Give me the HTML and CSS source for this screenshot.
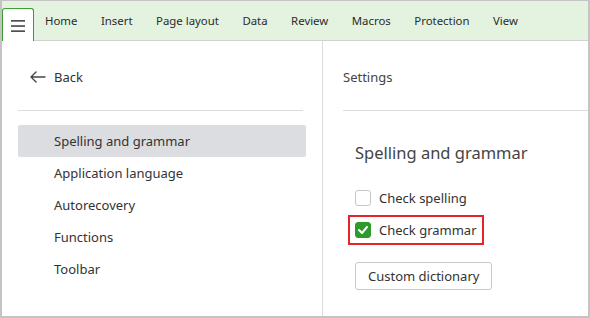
FILE: index.html
```html
<!DOCTYPE html>
<html>
<head>
<meta charset="utf-8">
<link rel="stylesheet" href="styles.css">
</head>
<body>
<div class="window">
  <div class="toolbar">
    <div class="menu-btn">
      <svg width="14" height="12" viewBox="0 0 14 12"><rect x="0" y="0" width="14" height="1.7" fill="#505050"/><rect x="0" y="5.2" width="14" height="1.7" fill="#505050"/><rect x="0" y="10.3" width="14" height="1.7" fill="#505050"/></svg>
    </div>
    <nav class="tabs">
      <span class="tab">Home</span>
      <span class="tab">Insert</span>
      <span class="tab">Page layout</span>
      <span class="tab">Data</span>
      <span class="tab">Review</span>
      <span class="tab">Macros</span>
      <span class="tab">Protection</span>
      <span class="tab">View</span>
    </nav>
  </div>
  <div class="main">
    <aside class="side">
      <div class="back">
        <svg class="back-icon" width="16" height="12" viewBox="0 0 16 12"><path d="M6 1 L1 6 L6 11 M1 6 H15" fill="none" stroke="#444" stroke-width="1.4" stroke-linecap="round" stroke-linejoin="round"/></svg>
        <span>Back</span>
      </div>
      <div class="side-rule"></div>
      <ul class="menu">
        <li class="item selected">Spelling and grammar</li>
        <li class="item">Application language</li>
        <li class="item">Autorecovery</li>
        <li class="item">Functions</li>
        <li class="item">Toolbar</li>
      </ul>
    </aside>
    <section class="content">
      <div class="title">Settings</div>
      <div class="rule"></div>
      <div class="body">
        <h2 class="heading">Spelling and grammar</h2>
        <div class="check-row">
          <span class="box"></span>
          <span>Check spelling</span>
        </div>
        <div class="check-row">
          <div class="highlight">
            <span class="box checked">
              <svg width="12" height="10" viewBox="0 0 12 10"><path d="M2 5 L5 8 L10 2" fill="none" stroke="#fff" stroke-width="2" stroke-linecap="round" stroke-linejoin="round"/></svg>
            </span>
            <span>Check grammar</span>
          </div>
        </div>
        <button class="btn">Custom dictionary</button>
      </div>
    </section>
  </div>
</div>
</body>
</html>
```

FILE: styles.css
```css
* { box-sizing: border-box; }
html, body { margin: 0; padding: 0; background: #fff; }
body {
  font-family: "Noto Sans", "Open Sans", sans-serif;
  color: #333;
  width: 590px;
  height: 318px;
  overflow: hidden;
}
.window {
  width: 590px;
  height: 318px;
  border-style: solid;
  border-color: #c4c4c4;
  border-width: 1px 2px 2px 2px;
  display: flex;
  flex-direction: column;
}
.toolbar {
  height: 40px;
  background: #e3f3df;
  border-bottom: 1px solid #d2d2d2;
  display: flex;
  align-items: flex-end;
  flex-shrink: 0;
}
.menu-btn {
  width: 32px;
  height: 33px;
  margin-bottom: -1px;
  background: #fff;
  border: 1px solid #3a9e33;
  border-bottom: none;
  border-radius: 3px 3px 0 0;
  display: flex;
  align-items: center;
  justify-content: center;
  padding-top: 2px;
}
.tabs {
  display: flex;
  gap: 23.5px;
  padding-left: 11px;
  height: 39px;
  align-items: center;
  font-size: 11.4px;
  color: #2b2b2b;
}
.main {
  flex: 1;
  display: flex;
  min-height: 0;
}
.side {
  width: 321px;
  flex-shrink: 0;
  border-right: 1px solid #dcdcdc;
  padding-left: 16px;
}
.back {
  margin-top: 23px;
  height: 26px;
  display: flex;
  align-items: center;
  font-size: 13px;
  padding-left: 12px;
  gap: 8px;
}
.side-rule {
  margin-top: 20px;
  width: 285px;
  height: 1px;
  background: #dcdcdc;
}
.menu {
  list-style: none;
  margin: 14px 0 0;
  padding: 0;
  width: 288px;
}
.item {
  height: 32px;
  display: flex;
  align-items: center;
  padding-left: 36px;
  font-size: 13px;
  border-radius: 2px;
}
.item.selected { background: #dcdde0; }
.content {
  flex: 1;
  padding-left: 20px;
}
.title {
  margin-top: 23px;
  height: 26px;
  display: flex;
  align-items: center;
  font-size: 13px;
  color: #444;
}
.rule {
  margin-top: 20px;
  height: 1px;
  background: #dcdcdc;
}
.body {
  padding-left: 12px;
}
.heading {
  margin: 30px 0 17px;
  font-size: 16.5px;
  font-weight: normal;
  line-height: 24px;
  color: #444;
}
.check-row {
  height: 32px;
  display: flex;
  align-items: center;
  gap: 8px;
  font-size: 13px;
}
.highlight {
  display: flex;
  align-items: center;
  gap: 8px;
  height: 30px;
  margin-left: -7px;
  padding: 0 5px;
  border: 2px solid #e3242b;
}
.box {
  width: 16px;
  height: 16px;
  border: 1px solid #c6c6c6;
  border-radius: 3px;
  background: #fff;
  display: flex;
  align-items: center;
  justify-content: center;
  flex-shrink: 0;
}
.box.checked {
  background: #2e9a2b;
  border-color: #2e9a2b;
}
.btn {
  margin-top: 16px;
  height: 28px;
  padding: 0 12px;
  font-family: inherit;
  font-size: 13px;
  color: #333;
  background: #fff;
  border: 1px solid #c8c8c8;
  border-radius: 3px;
}
```
